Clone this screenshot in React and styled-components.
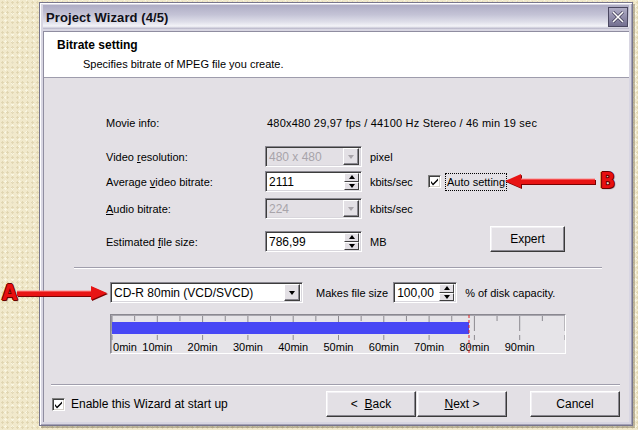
import React from 'react'
import styled, { createGlobalStyle } from 'styled-components'

const GlobalStyle = createGlobalStyle`
  html, body { margin: 0; padding: 0; }
  body {
    width: 638px;
    height: 430px;
    overflow: hidden;
    background-color: #f1e9cc;
    background-image:
      radial-gradient(rgba(190, 170, 120, 0.3) 1px, transparent 1.2px),
      radial-gradient(rgba(255, 255, 240, 0.6) 1px, transparent 1.2px);
    background-size: 5px 5px, 7px 7px;
    background-position: 0 0, 2px 3px;
    font-family: "Liberation Sans", Arial, sans-serif;
    font-size: 11px;
    color: #000;
  }
`

const Page = styled.div`
  position: relative;
  width: 638px;
  height: 430px;
  padding: 2px 0 0 39px;
  box-sizing: border-box;
`

const Window = styled.div`
  width: 594px;
  height: 424px;
  box-sizing: border-box;
  display: flex;
  flex-direction: column;
  padding: 2px 3px 3px 3px;
  background: #d8d6e2;
  border: 1px solid #77758c;
  box-shadow: inset 1px 1px #ffffff, inset -1px -1px #a4a2b6, 2px 2px 0 rgba(90, 80, 60, 0.35);
`

const TitleBar = styled.div`
  height: 24px;
  margin-bottom: 2px;
  display: flex;
  align-items: center;
  justify-content: space-between;
  padding: 0 1px 0 3px;
  background: linear-gradient(#aeacc4 0%, #c4c3d6 40%, #dedee9 70%, #f4f4f8 88%, #b4b2c6 100%);
`

const TitleText = styled.span`
  font-size: 13px;
  font-weight: bold;
  color: #101018;
  letter-spacing: 0.1px;
`

const CloseButton = styled.div`
  width: 20px;
  height: 20px;
  box-sizing: border-box;
  border: 1px solid #4a4760;
  background: linear-gradient(#b0adc6, #736f90);
  display: flex;
  align-items: center;
  justify-content: center;
`

const Client = styled.div`
  flex: 1;
  display: flex;
  flex-direction: column;
  border-top: 1px solid #8f8da0;
  border-left: 1px solid #8f8da0;
`

const Header = styled.div`
  height: 46px;
  box-sizing: border-box;
  background: #ffffff;
  border-bottom: 1px solid #9e9cac;
  padding: 6px 0 0 13px;
`

const HeaderTitle = styled.div`
  font-size: 12px;
  font-weight: bold;
  line-height: 14px;
`

const HeaderSub = styled.div`
  margin-top: 5px;
  padding-left: 26px;
  line-height: 14px;
`

const Body = styled.div`
  flex: 1;
  display: flex;
  flex-direction: column;
  background: #e3e0e5;
  padding: 34px 0 5px 0;
`

const InfoBlock = styled.div`
  padding-left: 62px;
`

const Row = styled.div`
  display: flex;
  align-items: center;
  height: 21px;
  margin-top: ${p => p.$mt || 0}px;
`

const Label = styled.div`
  width: 159px;
  flex: none;
`

const Value = styled.div`
  padding-left: 2px;
  white-space: nowrap;
  letter-spacing: 0.2px;
`

const Unit = styled.div`
  margin-left: 8px;
  width: 58px;
  flex: none;
`

const Sunken = styled.div`
  position: relative;
  width: ${p => p.$w}px;
  height: 21px;
  box-sizing: border-box;
  flex: none;
  display: flex;
  align-items: center;
  border: 1px solid;
  border-color: #8a8890 #ffffff #ffffff #8a8890;
  box-shadow: inset 1px 1px #3c3c3c, inset -1px -1px #d8d6dc;
  background: ${p => (p.$disabled ? '#e3e0e5' : '#ffffff')};
  color: ${p => (p.$disabled ? '#a8a4aa' : '#000')};
  padding: 0 2px 0 3px;
  margin-left: ${p => p.$ml || 0}px;
`

const FieldText = styled.span`
  flex: 1;
  font-size: 12px;
  white-space: nowrap;
`

const DropButton = styled.div`
  width: 16px;
  height: 17px;
  box-sizing: border-box;
  background: #e3e0e5;
  border: 1px solid;
  border-color: #ffffff #404040 #404040 #ffffff;
  box-shadow: inset -1px -1px #8a8890;
  display: flex;
  align-items: center;
  justify-content: center;
`

const Arrow = styled.div`
  width: 0;
  height: 0;
  border-left: 3.5px solid transparent;
  border-right: 3.5px solid transparent;
  border-top: 4px solid ${p => (p.$disabled ? '#a8a4aa' : '#000')};
  ${p => p.$up && 'transform: rotate(180deg);'}
`

const SpinCol = styled.div`
  width: 15px;
  height: 17px;
  display: flex;
  flex-direction: column;
`

const SpinHalf = styled.div`
  flex: 1;
  box-sizing: border-box;
  background: #e3e0e5;
  border: 1px solid;
  border-color: #ffffff #404040 #404040 #ffffff;
  display: flex;
  align-items: center;
  justify-content: center;
`

const CheckRow = styled.div`
  display: flex;
  align-items: center;
`

const CheckBox = styled.div`
  width: 13px;
  height: 13px;
  box-sizing: border-box;
  background: #fff;
  border: 1px solid;
  border-color: #808080 #ffffff #ffffff #808080;
  box-shadow: inset 1px 1px #404040, inset -1px -1px #d4d0c8;
  display: flex;
  align-items: center;
  justify-content: center;
  flex: none;
`

const FocusLabel = styled.span`
  margin-left: 4px;
  padding: 2px 1px 2px 1px;
  border: 1px dotted #000;
`

const Button = styled.div`
  width: ${p => p.$w || 90}px;
  height: 26px;
  box-sizing: border-box;
  flex: none;
  display: flex;
  align-items: center;
  justify-content: center;
  background: #e3e0e5;
  border: 1px solid;
  border-color: #ffffff #3a3a3a #3a3a3a #ffffff;
  box-shadow: inset -1px -1px #8a8890, inset 1px 1px #f2f0f4;
  font-size: 12px;
  white-space: pre;
  margin-left: ${p => p.$ml || 0}px;
  margin-top: ${p => p.$mt || 0}px;
`

const Separator = styled.div`
  height: 0;
  border-top: 1px solid #a09eac;
  border-bottom: 1px solid #ffffff;
  margin: ${p => p.$m};
`

const CapRow = styled.div`
  display: flex;
  align-items: center;
  height: 21px;
  margin-top: 13px;
  padding-left: 66px;
`

const Text = styled.span`
  margin-left: ${p => p.$ml || 0}px;
  white-space: nowrap;
`

const RulerBox = styled.div`
  width: 456px;
  height: 40px;
  margin: 11px 0 0 66px;
  box-sizing: border-box;
  border: 1px solid;
  border-color: #8a8890 #ffffff #ffffff #8a8890;
  box-shadow: inset 1px 1px #a8a6ae;
  background: #e6e4e8;
`

const Footer = styled.div`
  margin-top: auto;
`

const FooterRow = styled.div`
  display: flex;
  align-items: center;
  height: 26px;
  margin-top: 5px;
  padding: 0 9px 0 8px;
`

const FooterLabel = styled.span`
  margin-left: 6px;
  font-size: 12px;
`

const Spacer = styled.div`
  flex: 1;
`

const Callout = styled.div`
  position: absolute;
  left: ${p => p.$x}px;
  top: ${p => p.$y}px;
  display: flex;
  align-items: center;
`

const CalloutLetter = styled.span`
  font-family: "Liberation Sans Narrow", "DejaVu Sans Condensed", "Liberation Sans", sans-serif;
  font-weight: bold;
  font-size: 22px;
  line-height: 22px;
  color: #e81010;
  margin-left: ${p => p.$ml || 0}px;
  text-shadow: 1px 0 #6a0000, -1px 0 #6a0000, 0 1px #6a0000, 0 -1px #6a0000, 1px 1px 1px #400000;
`

const Check = () => (
  <svg width="9" height="9" viewBox="0 0 9 9">
    <path d="M1 4 L3 6.5 L8 1.5 L8 3.5 L3 8.5 L1 6 Z" fill="#000" />
  </svg>
)

const Combo = ({ w, value, disabled, ml }) => (
  <Sunken $w={w} $disabled={disabled} $ml={ml}>
    <FieldText>{value}</FieldText>
    <DropButton>
      <Arrow $disabled={disabled} />
    </DropButton>
  </Sunken>
)

const Spin = ({ w, value, ml }) => (
  <Sunken $w={w} $ml={ml}>
    <FieldText>{value}</FieldText>
    <SpinCol>
      <SpinHalf><Arrow $up /></SpinHalf>
      <SpinHalf><Arrow /></SpinHalf>
    </SpinCol>
  </Sunken>
)

const Ruler = () => {
  const step = 22.65
  const ticks = Array.from({ length: 21 }, (_, k) => k)
  return (
    <RulerBox>
      <svg width="454" height="38" viewBox="0 0 454 38">
        {ticks.map(k => {
          const x = 1 + k * step
          const major = k % 2 === 0
          return (
            <g key={k} stroke="#8c8a90" strokeWidth="1">
              <line x1={x} y1="1" x2={x} y2={major ? 16 : 6} />
              {major && <line x1={x} y1="20" x2={x} y2="25" />}
            </g>
          )
        })}
        <rect x="1" y="7" width="357" height="12" fill="#4747f5" />
        {ticks.filter(k => k % 2 === 0 && k < 20).map(k => (
          <text
            key={k}
            x={k === 0 ? 2 : 1 + k * step}
            y="36"
            fontSize="11"
            fontFamily='"Liberation Sans", Arial, sans-serif'
            textAnchor={k === 0 ? 'start' : 'middle'}
            fill="#000"
          >
            {k * 5}min
          </text>
        ))}
        <line x1="358" y1="0" x2="358" y2="38" stroke="#e02020" strokeWidth="1" strokeDasharray="3 2" />
      </svg>
    </RulerBox>
  )
}

const CalloutArrow = () => (
  <svg width="92" height="18" viewBox="0 0 92 18">
    <path d="M1 9 L17 2 L17 7 L91 7 L91 12 L17 12 L17 16 Z" fill="#7a0000" transform="translate(1 1)" />
    <path d="M1 9 L17 2 L17 7 L91 7 L91 12 L17 12 L17 16 Z" fill="#e81414" />
    <path d="M17 7 L91 7" stroke="#ff8a8a" strokeWidth="1" />
  </svg>
)

const RightCalloutArrow = () => (
  <svg width="92" height="18" viewBox="0 0 92 18">
    <path d="M91 9 L75 2 L75 7 L1 7 L1 12 L75 12 L75 16 Z" fill="#7a0000" transform="translate(0 1)" />
    <path d="M90 9 L74 2 L74 7 L0 7 L0 12 L74 12 L74 16 Z" fill="#e81414" />
    <path d="M0 7 L74 7" stroke="#ff8a8a" strokeWidth="1" />
  </svg>
)

export default function App() {
  return (
    <Page>
      <GlobalStyle />
      <Window>
        <TitleBar>
          <TitleText>Project Wizard (4/5)</TitleText>
          <CloseButton>
            <svg width="14" height="14" viewBox="0 0 14 14">
              <path d="M2 2 L12 12 M12 2 L2 12" stroke="#3a3650" strokeWidth="3" />
              <path d="M2 2 L12 12 M12 2 L2 12" stroke="#ffffff" strokeWidth="1.6" />
            </svg>
          </CloseButton>
        </TitleBar>
        <Client>
          <Header>
            <HeaderTitle>Bitrate setting</HeaderTitle>
            <HeaderSub>Specifies bitrate of MPEG file you create.</HeaderSub>
          </Header>
          <Body>
            <InfoBlock>
              <Row>
                <Label>Movie info:</Label>
                <Value>480x480 29,97 fps / 44100 Hz Stereo / 46 min 19 sec</Value>
              </Row>
              <Row $mt={13}>
                <Label>Video <u>r</u>esolution:</Label>
                <Combo w={97} value="480 x 480" disabled />
                <Unit>pixel</Unit>
              </Row>
              <Row $mt={4}>
                <Label>Average <u>v</u>ideo bitrate:</Label>
                <Spin w={97} value="2111" />
                <Unit>kbits/sec</Unit>
                <CheckRow>
                  <CheckBox><Check /></CheckBox>
                  <FocusLabel>Auto setting</FocusLabel>
                </CheckRow>
              </Row>
              <Row $mt={6}>
                <Label><u>A</u>udio bitrate:</Label>
                <Combo w={97} value="224" disabled />
                <Unit>kbits/sec</Unit>
              </Row>
              <Row $mt={12}>
                <Label>Estimated <u>f</u>ile size:</Label>
                <Spin w={97} value="786,99" />
                <Unit>MB</Unit>
                <Button $w={75} $ml={62} $mt={-5}>Expert</Button>
              </Row>
            </InfoBlock>
            <Separator $m="15px 27px 0 30px" />
            <CapRow>
              <Combo w={193} value="CD-R 80min (VCD/SVCD)" />
              <Text $ml={13}>Makes file size</Text>
              <Spin w={64} value="100,00" ml={5} />
              <Text $ml={8}>% of disk capacity.</Text>
            </CapRow>
            <Ruler />
            <Footer>
              <Separator $m="0 9px 0 7px" />
              <FooterRow>
                <CheckBox><Check /></CheckBox>
                <FooterLabel>Enable this Wizard at start up</FooterLabel>
                <Spacer />
                <Button $w={90}><span>{'<  '}<u>B</u>ack</span></Button>
                <Button $w={90} $ml={1}><span><u>N</u>{'ext >'}</span></Button>
                <Button $w={90} $ml={23}>Cancel</Button>
              </FooterRow>
            </Footer>
          </Body>
        </Client>
      </Window>
      <Callout $x={2} $y={282}>
        <CalloutLetter>A</CalloutLetter>
        <RightCalloutArrow />
      </Callout>
      <Callout $x={504} $y={170}>
        <CalloutArrow />
        <CalloutLetter $ml={4}>B</CalloutLetter>
      </Callout>
    </Page>
  )
}
